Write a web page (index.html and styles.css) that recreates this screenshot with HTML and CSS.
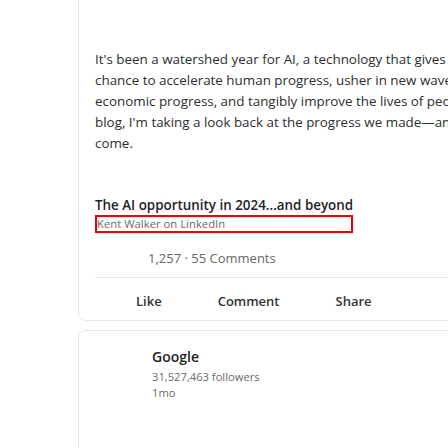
FILE: index.html
```html
<!DOCTYPE html>
<html lang="en">
<head>
<meta charset="utf-8">
<title>Post</title>
<link rel="stylesheet" href="styles.css">
</head>
<body>
<div class="viewport">
  <article class="card post">
    <p class="body-text">It's been a watershed year for AI, a technology that gives us a once-in-a-generation<br>chance to accelerate human progress, usher in new waves of innovation and<br>economic progress, and tangibly improve the lives of people around the world. In this<br>blog, I'm taking a look back at the progress we made—and looking ahead to what's to<br>come.</p>
    <div class="article-link">
      <div class="article-title">The AI opportunity in 2024...and beyond</div>
      <div class="article-source">Kent Walker on LinkedIn</div>
    </div>
    <div class="counts">1,257 · 55 Comments</div>
    <div class="divider"></div>
    <div class="actions">
      <span class="action">Like</span>
      <span class="action">Comment</span>
      <span class="action">Share</span>
    </div>
  </article>
  <article class="card company">
    <div class="company-name">Google</div>
    <div class="company-meta">31,527,463 followers</div>
    <div class="company-meta">1mo</div>
  </article>
</div>
</body>
</html>
```
FILE: styles.css
```css
html, body {
  margin: 0;
  padding: 0;
  background: #ffffff;
  overflow: hidden;
}

.viewport {
  width: 448px;
  height: 448px;
  overflow: hidden;
  font-family: "Open Sans", "Noto Sans", sans-serif;
  color: #333333;
}

.card {
  box-sizing: border-box;
  width: 640px;
  margin-left: 78px;
  border: 1px solid #e6e6e6;
  border-radius: 8px;
  background: #ffffff;
}

.post {
  margin-top: -12px;
  padding: 60px 0 0 16px;
}

.body-text {
  margin: 0;
  font-size: 13.4px;
  line-height: 21px;
  white-space: nowrap;
  color: #2e2e2e;
}

.article-link {
  width: fit-content;
  margin-top: 42px;
}

.article-title {
  font-size: 13.4px;
  font-weight: 600;
  line-height: 18px;
  color: #1f1f1f;
  white-space: nowrap;
}

.article-source {
  box-sizing: border-box;
  margin-top: 1px;
  height: 18px;
  border: 2px solid #ee0000;
  font-size: 11.3px;
  line-height: 14px;
  color: #6a6a6a;
  white-space: nowrap;
}

.counts {
  margin-top: 15px;
  padding-left: 53px;
  font-size: 13px;
  line-height: 20px;
  color: #666666;
}

.divider {
  margin-top: 9px;
  height: 1px;
  background: #e6e6e6;
}

.actions {
  display: flex;
  gap: 56px;
  padding: 13px 0 9px 41px;
}

.action {
  font-size: 13px;
  font-weight: 600;
  line-height: 20px;
  color: #333333;
}

.company {
  margin-top: 9px;
  height: 200px;
  padding: 16px 0 0 73px;
}

.company-name {
  font-size: 14px;
  font-weight: 600;
  line-height: 20px;
  color: #1f1f1f;
}

.company-meta {
  font-size: 11.2px;
  line-height: 16px;
  color: #6a6a6a;
}

.company-name + .company-meta {
  margin-top: 2px;
}
```
